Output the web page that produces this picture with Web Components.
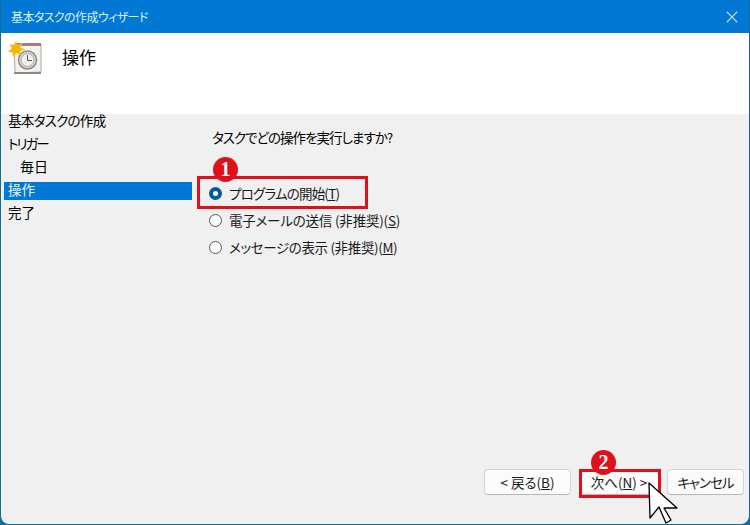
<!DOCTYPE html>
<html lang="ja">
<head>
<meta charset="utf-8">
<title>基本タスクの作成ウィザード</title>
<style>
    html, body { margin: 0; padding: 0; background: #0a6ea8; }
    body { font-family: "Noto Sans CJK JP", "Noto Sans", sans-serif; font-feature-settings: "palt"; width: 750px; height: 525px; overflow: hidden; }
</style>
</head>
<body>
<template id="wizard_window_tpl">
    <style>
        :host {
            display: flex;
            flex-direction: column;
            position: relative;
            width: 750px;
            height: 525px;
            box-sizing: border-box;
            border: 1px solid #0f6f93;
            border-top: 0;
            border-radius: 0 0 9px 9px;
            background: #f0f0f0;
            overflow: hidden;
        }
        .title {
            flex: 0 0 33px;
            display: flex;
            align-items: center;
            justify-content: space-between;
            margin: 0 -1px;
            padding: 0 12px 0 11px;
            background: #0078d4;
            color: #dff1fc;
            font-size: 12px;
            letter-spacing: -.6px;
        }
        .title svg { width: 12px; height: 12px; display: block; }
        .banner {
            flex: 0 0 81px;
            display: flex;
            align-items: flex-start;
            box-sizing: border-box;
            padding: 8px 0 0 7px;
            background: #fff;
            color: #000;
            font-size: 17px;
        }
        .banner span { margin: 4px 0 0 19px; line-height: 24px; }
        .body { flex: 1; display: flex; min-height: 0; }
    </style>
    <div class="title"><span id="caption"></span>
        <svg viewBox="0 0 13 13"><path d="M1 1L12 12M12 1L1 12" stroke="#cfeaff" stroke-width="1.2" fill="none"/></svg>
    </div>
    <div class="banner"><slot name="icon"></slot><span id="heading"></span></div>
    <div class="body"><slot></slot></div>
    <slot name="overlay"></slot>
</template>

<template id="step_list_tpl">
    <style>
        :host {
            display: flex;
            flex-direction: column;
            flex: 0 0 191px;
            box-sizing: border-box;
            padding: 0 0 0 3px;
            margin-top: -1px;
            gap: 5px;
            color: #000;
        }
    </style>
    <slot></slot>
</template>

<template id="step_item_tpl">
    <style>
        :host {
            display: block;
            height: 18px;
            line-height: 14px;
            padding-left: 4px;
            font-size: 13.5px;
            white-space: nowrap;
        }
        :host([sub]) { padding-left: 16px; }
        :host([current]) { background: #0078d4; color: #e6f4fd; }
    </style>
    <slot></slot>
</template>

<template id="action_page_tpl">
    <style>
        :host {
            display: flex;
            flex-direction: column;
            flex: 1;
            box-sizing: border-box;
            padding: 13px 5px 29px 17px;
            font-size: 13.5px;
            color: #000;
        }
        .q { line-height: 20px; padding-left: 3px; margin-bottom: 36px; letter-spacing: -1px; }
        .options { display: flex; flex-direction: column; gap: 7px; }
        .foot { margin-top: auto; display: flex; gap: 8px; padding-left: 275px; }
    </style>
    <div class="q"><slot name="question"></slot></div>
    <div class="options"><slot name="option"></slot></div>
    <div class="foot"><slot name="button"></slot></div>
</template>

<template id="radio_option_tpl">
    <style>
        :host { display: flex; align-items: center; height: 20px; gap: 7px; white-space: nowrap; font-size: 13.5px; color: #1a1a1a; }
        i {
            width: 13px; height: 13px; box-sizing: border-box; border-radius: 50%;
            border: 1px solid #555; background: #fff; flex: none;
        }
        :host([checked]) i { border: 4px solid #005a9e; background: #fff; }
        u { text-underline-offset: 1px; }
    </style>
    <i></i><span><slot></slot></span>
</template>

<template id="wizard_button_tpl">
    <style>
        :host {
            display: flex;
            align-items: center;
            justify-content: center;
            box-sizing: border-box;
            height: 26px;
            border: 1px solid #d4d4d4;
            border-bottom-color: #b8b8b8;
            border-radius: 4px;
            background: #fbfbfb;
            font-size: 13.5px;
            color: #1a1a1a;
            white-space: nowrap;
        }
    </style>
    <slot></slot>
</template>

<template id="call_out_tpl">
    <style>
        :host { position: absolute; display: block; box-sizing: border-box; border: 3px solid #e0101a; }
    </style>
</template>

<template id="step_badge_tpl">
    <style>
        :host {
            position: absolute;
            display: flex;
            align-items: center;
            justify-content: center;
            box-sizing: border-box;
            width: 25px;
            height: 25px;
            padding-bottom: 2px;
            border-radius: 50%;
            background: #e0101a;
            color: #fff;
            font: bold 20px/20px "Liberation Serif", serif;
        }
    </style>
    <slot></slot>
</template>

<script type="module">
    function shadow(host, id) {
        host.attachShadow({mode: 'open'});
        host.shadowRoot.appendChild(document.getElementById(id).content.cloneNode(true));
    }
    class WizardWindow extends HTMLElement {
        constructor() {
            super();
            shadow(this, 'wizard_window_tpl');
            this.shadowRoot.getElementById('caption').textContent = this.getAttribute('caption');
            this.shadowRoot.getElementById('heading').textContent = this.getAttribute('heading');
        }
    }
    const simple = {
        'step-list': 'step_list_tpl',
        'step-item': 'step_item_tpl',
        'action-page': 'action_page_tpl',
        'radio-option': 'radio_option_tpl',
        'wizard-button': 'wizard_button_tpl',
        'call-out': 'call_out_tpl',
        'step-badge': 'step_badge_tpl',
    };
    customElements.define('wizard-window', WizardWindow);
    for (const [tag, tpl] of Object.entries(simple)) {
        customElements.define(tag, class extends HTMLElement {
            constructor() {
                super();
                shadow(this, tpl);
            }
        });
    }
</script>

<wizard-window caption="基本タスクの作成ウィザード" heading="操作">
    <svg slot="icon" width="35" height="33" viewBox="0 0 35 33">
        <path d="M6 3H33V31L7 32Z" fill="#f4f1ee" stroke="#b0a8a4"/>
        <rect x="8" y="2" width="25" height="3" fill="#a87f78"/>
        <path d="M6 31H33V33H6Z" fill="#8d8583"/>
        <circle cx="19.500" cy="19" r="9" fill="#dcdcd8" stroke="#8a8a86" stroke-width="1.5"/>
        <circle cx="19.500" cy="19" r="6.500" fill="#eeeeea" stroke="#a8a8a4"/>
        <path d="M19.500 14V19.500H24" fill="none" stroke="#555" stroke-width="1"/>
        <path d="M8 0L9.500 4.500L14 2.500L12 6.500L17 8.500L12 10L12.500 14L8.500 12L5 16L4.500 11.500L0 10.500L4 7.500L1.500 3L6 4.500Z" fill="#f7b500" stroke="#f9d45c" stroke-width=".5"/>
    </svg>
    <step-list>
        <step-item style="letter-spacing:-.7px">基本タスクの作成</step-item>
        <step-item style="letter-spacing:-2px">トリガー</step-item>
        <step-item sub style="font-size:14px">毎日</step-item>
        <step-item current>操作</step-item>
        <step-item>完了</step-item>
    </step-list>
    <action-page>
        <span slot="question">タスクでどの操作を実行しますか?</span>
        <radio-option slot="option" checked style="letter-spacing:-.8px">プログラムの開始(<u>T</u>)</radio-option>
        <radio-option slot="option" style="letter-spacing:-.2px">電子メールの送信 (非推奨)(<u>S</u>)</radio-option>
        <radio-option slot="option" style="letter-spacing:-.35px">メッセージの表示 (非推奨)(<u>M</u>)</radio-option>
        <wizard-button slot="button" style="width:87px">&lt; 戻る(<u>B</u>)</wizard-button>
        <wizard-button slot="button" style="width:80px">次へ(<u>N</u>) &gt;</wizard-button>
        <wizard-button slot="button" style="width:77px;letter-spacing:-1px">キャンセル</wizard-button>
    </action-page>
    <call-out slot="overlay" style="left:196px;top:176px;width:171px;height:33px"></call-out>
    <step-badge slot="overlay" style="left:212px;top:157px">1</step-badge>
    <call-out slot="overlay" style="left:578px;top:469px;width:82px;height:29px"></call-out>
    <step-badge slot="overlay" style="left:590px;top:450px">2</step-badge>
    <svg slot="overlay" style="position:absolute;left:647px;top:482px" width="31" height="43" viewBox="0 0 31 43">
        <path d="M1 1L2 36L11 25L18 41L23 38L16 26L29 26Z" fill="#fff" stroke="#000" stroke-width="1.3" stroke-linejoin="round"/>
    </svg>
</wizard-window>
</body>
</html>
